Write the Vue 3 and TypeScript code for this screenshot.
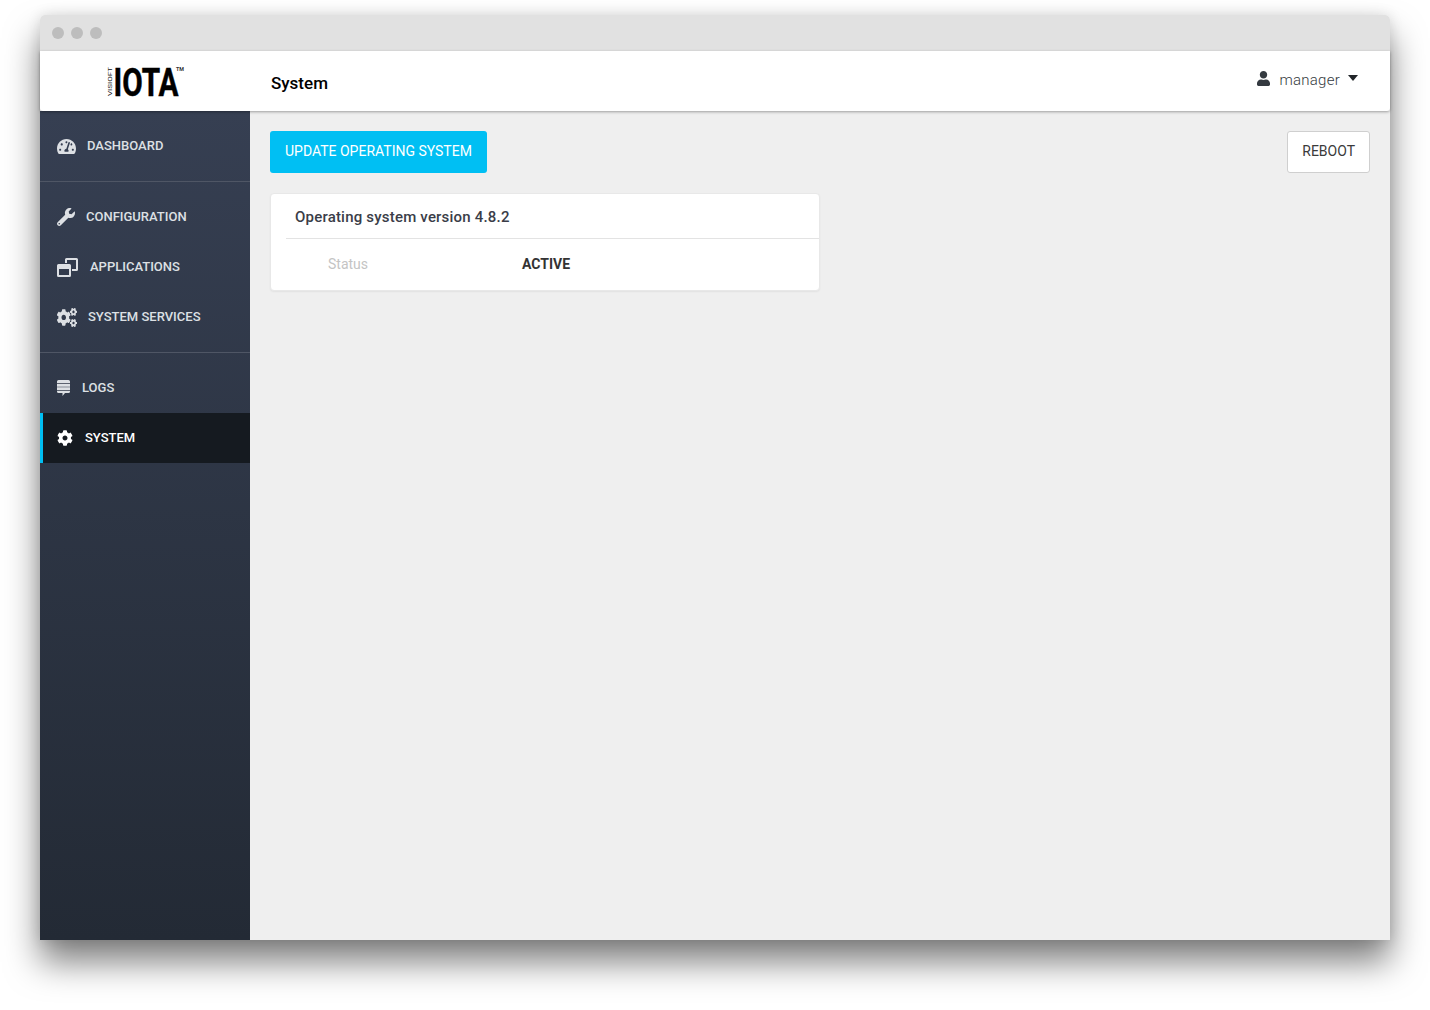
<script setup lang="ts">
const icons = {
  dashboard: { box: "0 0 576 512", d: "M288 32C128.94 32 0 160.94 0 320c0 52.8 14.25 102.26 39.06 144.8 5.61 9.62 16.3 15.2 27.44 15.2h443c11.14 0 21.83-5.58 27.44-15.2C561.75 422.26 576 372.8 576 320c0-159.06-128.94-288-288-288zm0 64c14.71 0 26.58 10.13 30.32 23.65-1.11 2.26-2.64 4.23-3.45 6.67l-9.22 27.67c-5.13 3.49-10.97 6.01-17.64 6.01-17.67 0-32-14.33-32-32S270.33 96 288 96zM96 384c-17.67 0-32-14.33-32-32s14.33-32 32-32 32 14.33 32 32-14.33 32-32 32zm48-160c-17.67 0-32-14.33-32-32s14.33-32 32-32 32 14.33 32 32-14.33 32-32 32zm246.77-72.41l-61.33 184C343.13 347.33 352 364.54 352 384c0 11.72-3.38 22.55-8.88 32H232.88c-5.5-9.45-8.88-20.28-8.88-32 0-33.94 26.5-61.43 59.9-63.59l61.34-184.01c4.17-12.56 17.73-19.45 30.36-15.17 12.57 4.19 19.35 17.79 15.17 30.36zm14.66 57.2l15.52-46.55c3.47-1.29 7.13-2.23 11.05-2.23 17.67 0 32 14.33 32 32s-14.33 32-32 32c-11.38-.01-20.89-6.28-26.57-15.22zM480 384c-17.67 0-32-14.33-32-32s14.33-32 32-32 32 14.33 32 32-14.33 32-32 32z" },
  wrench: { box: "0 0 512 512", d: "M507.73 109.1c-2.24-9.03-13.54-12.09-20.12-5.51l-74.36 74.36-67.88-11.31-11.31-67.88 74.36-74.36c6.62-6.62 3.43-17.9-5.66-20.16-47.38-11.74-99.55.91-136.58 37.93-39.64 39.64-50.55 97.1-34.05 147.2L18.74 402.76c-24.99 24.99-24.99 65.51 0 90.5 24.99 24.99 65.51 24.99 90.5 0l213.21-213.21c50.12 16.71 107.47 5.68 147.37-34.22 37.07-37.07 49.7-89.32 37.91-136.73zM64 472c-13.25 0-24-10.75-24-24 0-13.26 10.75-24 24-24s24 10.74 24 24c0 13.25-10.75 24-24 24z" },
  windows: { box: "0 0 21 19", d: "M8 5V1.500A1.500 1.500 0 0 1 9.500 0h10A1.500 1.500 0 0 1 21 1.500v10a1.500 1.500 0 0 1-1.500 1.500H15v-2h4V2h-9v3zM1.500 6h11A1.500 1.500 0 0 1 14 7.500v10a1.500 1.500 0 0 1-1.500 1.500h-11A1.500 1.500 0 0 1 0 17.500v-10A1.500 1.500 0 0 1 1.500 6zM2 11v6h10v-6z" },
  cogs: { box: "0 0 640 512", d: "M512.1 191l-8.2 14.3c-3 5.3-9.4 7.500-15.100 5.400-11.800-4.400-22.600-10.700-32.100-18.600-4.600-3.800-5.800-10.500-2.800-15.700l8.200-14.300c-6.900-8-12.300-17.300-15.900-27.400h-16.500c-6 0-11.200-4.300-12.200-10.300-2-12-2.100-24.600 0-37.100 1-6 6.200-10.400 12.200-10.400h16.500c3.600-10.100 9-19.400 15.900-27.400l-8.200-14.300c-3-5.200-1.900-11.900 2.800-15.700 9.500-7.900 20.400-14.200 32.100-18.600 5.700-2.100 12.100.1 15.100 5.400l8.200 14.300c10.500-1.900 21.200-1.900 31.700 0L552 6.300c3-5.300 9.400-7.500 15.100-5.400 11.800 4.400 22.600 10.700 32.100 18.600 4.600 3.800 5.800 10.500 2.800 15.700l-8.200 14.300c6.900 8 12.300 17.300 15.900 27.400h16.500c6 0 11.200 4.300 12.200 10.300 2 12 2.100 24.600 0 37.100-1 6-6.200 10.400-12.200 10.400h-16.500c-3.600 10.100-9 19.400-15.900 27.400l8.200 14.300c3 5.200 1.900 11.900-2.800 15.700-9.500 7.900-20.400 14.200-32.100 18.600-5.700 2.100-12.100-.1-15.100-5.400l-8.200-14.300c-10.400 1.900-21.200 1.900-31.700 0zm-10.500-58.800c38.500 29.600 82.400-14.300 52.800-52.800-38.500-29.700-82.400 14.300-52.800 52.800zM386.300 286.100l33.700 16.800c10.100 5.800 14.500 18.100 10.500 29.100-8.900 24.200-26.400 46.400-42.600 65.800-7.400 8.900-20.200 11.100-30.300 5.300l-29.100-16.800c-16 13.700-34.600 24.600-54.900 31.700v33.600c0 11.600-8.300 21.600-19.700 23.600-24.600 4.200-50.400 4.400-75.900 0-11.500-2-20-11.900-20-23.600V418c-20.300-7.200-38.900-18-54.900-31.700L74 403c-10 5.800-22.900 3.600-30.300-5.300-16.200-19.400-33.300-41.600-42.200-65.700-4-10.900.4-23.200 10.500-29.100l33.300-16.800c-3.900-20.900-3.900-42.400 0-63.400L12 205.800c-10.100-5.800-14.600-18.100-10.500-29 8.900-24.200 26-46.400 42.200-65.800 7.400-8.900 20.200-11.100 30.300-5.300l29.100 16.800c16-13.700 34.600-24.600 54.900-31.700V57.100c0-11.500 8.200-21.500 19.600-23.500 24.600-4.200 50.500-4.400 76-.1 11.500 2 20 11.900 20 23.600v33.600c20.300 7.200 38.900 18 54.900 31.700l29.100-16.800c10-5.800 22.900-3.600 30.300 5.300 16.200 19.400 33.200 41.600 42.100 65.800 4 10.900.1 23.200-10 29.100l-33.700 16.800c3.900 21 3.900 42.500 0 63.500zm-117.600 21.100c59.200-77-28.700-164.900-105.700-105.700-59.200 77 28.700 164.900 105.700 105.700zm243.400 182.700l-8.200 14.300c-3 5.300-9.400 7.500-15.100 5.400-11.800-4.400-22.600-10.700-32.100-18.600-4.600-3.800-5.800-10.500-2.800-15.700l8.200-14.300c-6.900-8-12.300-17.300-15.900-27.400h-16.500c-6 0-11.200-4.300-12.200-10.300-2-12-2.100-24.600 0-37.100 1-6 6.200-10.400 12.200-10.400h16.500c3.600-10.100 9-19.400 15.900-27.400l-8.200-14.300c-3-5.200-1.900-11.900 2.800-15.700 9.500-7.900 20.400-14.200 32.100-18.600 5.700-2.100 12.100.1 15.100 5.400l8.200 14.300c10.500-1.900 21.200-1.900 31.700 0l8.200-14.300c3-5.300 9.400-7.500 15.100-5.400 11.800 4.400 22.600 10.700 32.100 18.600 4.600 3.800 5.800 10.500 2.800 15.700l-8.200 14.300c6.900 8 12.300 17.300 15.900 27.400h16.500c6 0 11.200 4.300 12.200 10.300 2 12 2.100 24.600 0 37.100-1 6-6.200 10.400-12.200 10.400h-16.500c-3.600 10.100-9 19.400-15.900 27.400l8.200 14.300c3 5.200 1.900 11.900-2.800 15.700-9.500 7.900-20.400 14.200-32.100 18.600-5.700 2.100-12.100-.1-15.100-5.400l-8.200-14.300c-10.400 1.900-21.200 1.900-31.700 0zM501.600 431c38.500 29.600 82.400-14.300 52.800-52.800-38.500-29.600-82.400 14.300-52.800 52.800z" },
  logs: { box: "0 0 13 16", d: "M1.500 0h10A1.500 1.500 0 0 1 13 1.500v1.800H0V1.500A1.500 1.500 0 0 1 1.500 0zM0 3.900h13v2.800H0zM0 7.300h13v2.800H0zM0 10.700h13v.800a1.500 1.500 0 0 1-1.500 1.500H8l-2.500 3v-3h-4A1.500 1.500 0 0 1 0 11.500z" },
  cog: { box: "0 0 512 512", d: "M487.400 315.700l-42.600-24.600c4.300-23.200 4.300-47 0-70.200l42.600-24.600c4.900-2.800 7.100-8.600 5.500-14-11.100-35.600-30-67.800-54.700-94.600-3.800-4.100-10-5.100-14.800-2.300L380.800 110c-17.900-15.400-38.500-27.300-60.800-35.100V25.800c0-5.600-3.900-10.500-9.400-11.700-36.700-8.200-74.300-7.800-109.200 0-5.500 1.200-9.400 6.100-9.400 11.700V75c-22.200 7.900-42.800 19.800-60.800 35.100L88.700 85.500c-4.900-2.800-11-1.900-14.800 2.300-24.700 26.700-43.600 58.900-54.700 94.600-1.700 5.400.6 11.200 5.500 14L67.300 221c-4.300 23.200-4.300 47 0 70.200l-42.600 24.600c-4.900 2.800-7.100 8.600-5.500 14 11.100 35.600 30 67.800 54.700 94.600 3.800 4.100 10 5.100 14.800 2.300l42.600-24.600c17.900 15.400 38.500 27.300 60.800 35.100v49.200c0 5.600 3.900 10.500 9.400 11.700 36.700 8.200 74.300 7.800 109.200 0 5.500-1.200 9.400-6.100 9.400-11.700v-49.200c22.200-7.900 42.800-19.800 60.800-35.100l42.600 24.600c4.900 2.800 11 1.900 14.800-2.300 24.700-26.700 43.600-58.900 54.700-94.600 1.500-5.500-.7-11.300-5.600-14.100zM256 336c-44.100 0-80-35.900-80-80s35.900-80 80-80 80 35.900 80 80-35.900 80-80 80z" },
};

type IconName = keyof typeof icons;

interface NavItem {
  label: string;
  icon: IconName;
  width: number;
  height: number;
  gap: number;
  active?: boolean;
}

const navGroups: NavItem[][] = [
  [{ label: "DASHBOARD", icon: "dashboard", width: 19, height: 17, gap: 11 }],
  [
    { label: "CONFIGURATION", icon: "wrench", width: 18, height: 18, gap: 11 },
    { label: "APPLICATIONS", icon: "windows", width: 21, height: 19, gap: 12 },
    { label: "SYSTEM SERVICES", icon: "cogs", width: 20, height: 19, gap: 11 },
  ],
  [
    { label: "LOGS", icon: "logs", width: 13, height: 16, gap: 12 },
    { label: "SYSTEM", icon: "cog", width: 16, height: 16, gap: 12, active: true },
  ],
];
</script>

<template>
  <div class="page">
    <div class="window">
      <div class="titlebar">
        <span class="dot"></span>
        <span class="dot"></span>
        <span class="dot"></span>
      </div>

      <header class="header">
        <div class="logo">
          <svg width="100" height="40" viewBox="0 0 100 40">
            <text class="logo-small" transform="translate(5.500 32) rotate(-90)" textLength="29" lengthAdjust="spacingAndGlyphs">VISIOFT</text>
            <text class="logo-main" x="7.500" y="32" textLength="65" lengthAdjust="spacingAndGlyphs">IOTA</text>
            <text class="logo-tm" x="70" y="7" textLength="8" lengthAdjust="spacingAndGlyphs">TM</text>
          </svg>
        </div>
        <h1 class="title">System</h1>
        <div class="user">
          <svg class="user-icon" viewBox="0 0 448 512" width="13" height="15">
            <path d="M224 256c70.700 0 128-57.300 128-128S294.700 0 224 0 96 57.300 96 128s57.300 128 128 128zm89.600 32h-16.700c-22.200 10.200-46.900 16-72.900 16s-50.600-5.800-72.900-16h-16.700C60.200 288 0 348.200 0 422.400V464c0 26.500 21.500 48 48 48h352c26.500 0 48-21.500 48-48v-41.600c0-74.200-60.200-134.400-134.400-134.400z" />
          </svg>
          <span class="user-name">manager</span>
          <span class="caret"></span>
        </div>
      </header>

      <div class="body">
        <nav class="sidebar">
          <div v-for="(group, i) in navGroups" :key="i" class="nav-group">
            <a v-for="item in group" :key="item.label" class="nav-item" :class="{ active: item.active }">
              <svg
                class="nav-icon"
                :viewBox="icons[item.icon].box"
                preserveAspectRatio="none"
                :style="{ width: item.width + 'px', height: item.height + 'px', marginRight: item.gap + 'px' }"
              >
                <path :d="icons[item.icon].d" />
              </svg>
              <span class="nav-label">{{ item.label }}</span>
            </a>
          </div>
        </nav>

        <main class="main">
          <div class="toolbar">
            <button class="btn btn-primary">UPDATE OPERATING SYSTEM</button>
            <button class="btn btn-default">REBOOT</button>
          </div>

          <section class="card">
            <div class="card-title">Operating system version 4.8.2</div>
            <div class="card-row">
              <span class="row-label">Status</span>
              <span class="row-value">ACTIVE</span>
            </div>
          </section>
        </main>
      </div>
    </div>
  </div>
</template>

<style>
html,
body {
  background: #fff;
}
</style>

<style scoped>
.page {
  box-sizing: border-box;
  width: 1430px;
  height: 1010px;
  padding: 15px 40px 70px;
  overflow: hidden;
  font-family: Roboto, sans-serif;
}

.window {
  display: flex;
  flex-direction: column;
  height: 925px;
  border-radius: 5px 5px 0 0;
  box-shadow: 0 22px 34px rgba(0, 0, 0, 0.5), 0 0 14px rgba(0, 0, 0, 0.12);
}

.titlebar {
  display: flex;
  align-items: center;
  gap: 7px;
  height: 36px;
  flex: none;
  padding-left: 12px;
  background: #e1e1e1;
  border-radius: 5px 5px 0 0;
}

.dot {
  width: 12px;
  height: 12px;
  border-radius: 50%;
  background: #bdbdbd;
}

.header {
  position: relative;
  z-index: 1;
  display: flex;
  align-items: center;
  height: 60px;
  flex: none;
  background: #fff;
  border-radius: 0 0 3px 3px;
  box-shadow: 0 1px 3px rgba(0, 0, 0, 0.35);
}

.logo {
  display: flex;
  width: 210px;
  padding-left: 66px;
  box-sizing: border-box;
  padding-top: 5px;
}

.logo-main {
  font: 700 39px Roboto, sans-serif;
  fill: #000;
  stroke: #000;
  stroke-width: 0.5px;
}

.logo-small {
  font: 400 6px Roboto, sans-serif;
  fill: #111;
}

.logo-tm {
  font: 700 6px Roboto, sans-serif;
  fill: #333;
}

.title {
  margin: 3px 0 0 21px;
  font-size: 17px;
  font-weight: 500;
  color: #000;
}

.user {
  display: flex;
  align-items: center;
  margin-left: auto;
  margin-right: 32px;
  margin-top: -3px;
}

.user-icon {
  fill: #343a40;
  margin-right: 9px;
  margin-top: -3px;
}

.user-name {
  font-size: 15px;
  font-weight: 300;
  letter-spacing: 0.25px;
  color: #343a40;
}

.caret {
  width: 0;
  height: 0;
  margin-left: 8px;
  margin-top: -3px;
  border-top: 6px solid #212529;
  border-left: 5.500px solid transparent;
  border-right: 5.500px solid transparent;
}

.body {
  display: flex;
  flex: 1;
  min-height: 0;
}

.sidebar {
  width: 210px;
  flex: none;
  background: linear-gradient(180deg, #363f52 0%, #232a35 100%);
}

.nav-group {
  padding: 10px 0;
  border-bottom: 1px solid #4f5665;
}

.nav-group:last-child {
  border-bottom: none;
}

.nav-item {
  display: flex;
  align-items: center;
  box-sizing: border-box;
  height: 50px;
  padding-left: 17px;
  font-size: 13px;
  font-weight: 500;
  color: #dde0e4;
}

.nav-label {
  margin-bottom: 2px;
}

.nav-item.active {
  padding-left: 14px;
  border-left: 3px solid #00bff3;
  background: #151a20;
  color: #fff;
}

.nav-icon {
  flex: none;
  fill: currentColor;
}

.main {
  flex: 1;
  min-width: 0;
  padding: 20px;
  background: #efefef;
}

.toolbar {
  display: flex;
  justify-content: space-between;
  margin-bottom: 20px;
}

.btn {
  height: 42px;
  padding: 0 15px 2px;
  font-family: inherit;
  font-size: 14px;
  border-radius: 3px;
  cursor: pointer;
}

.btn-primary {
  border: none;
  background: #00bff3;
  color: #fff;
}

.btn-default {
  padding: 0 14px 2px;
  border: 1px solid #cfcfcf;
  background: #fff;
  color: #3a3a3a;
}

.card {
  box-sizing: border-box;
  width: 550px;
  padding: 0 0 0 15px;
  background: #fff;
  border: 1px solid #e8e8e8;
  border-radius: 4px;
  box-shadow: 0 1px 2px rgba(0, 0, 0, 0.06);
}

.card-title {
  height: 44px;
  padding-left: 9px;
  line-height: 46px;
  font-size: 15px;
  font-weight: 500;
  color: #3a3d48;
  letter-spacing: 0.2px;
  border-bottom: 1px solid #e3e3e3;
}

.card-row {
  display: flex;
  align-items: center;
  height: 49px;
  padding-bottom: 2px;
  font-size: 14px;
}

.row-label {
  width: 194px;
  padding-left: 42px;
  color: #c4c4c4;
}

.row-value {
  font-weight: 700;
  color: #333;
}
</style>
